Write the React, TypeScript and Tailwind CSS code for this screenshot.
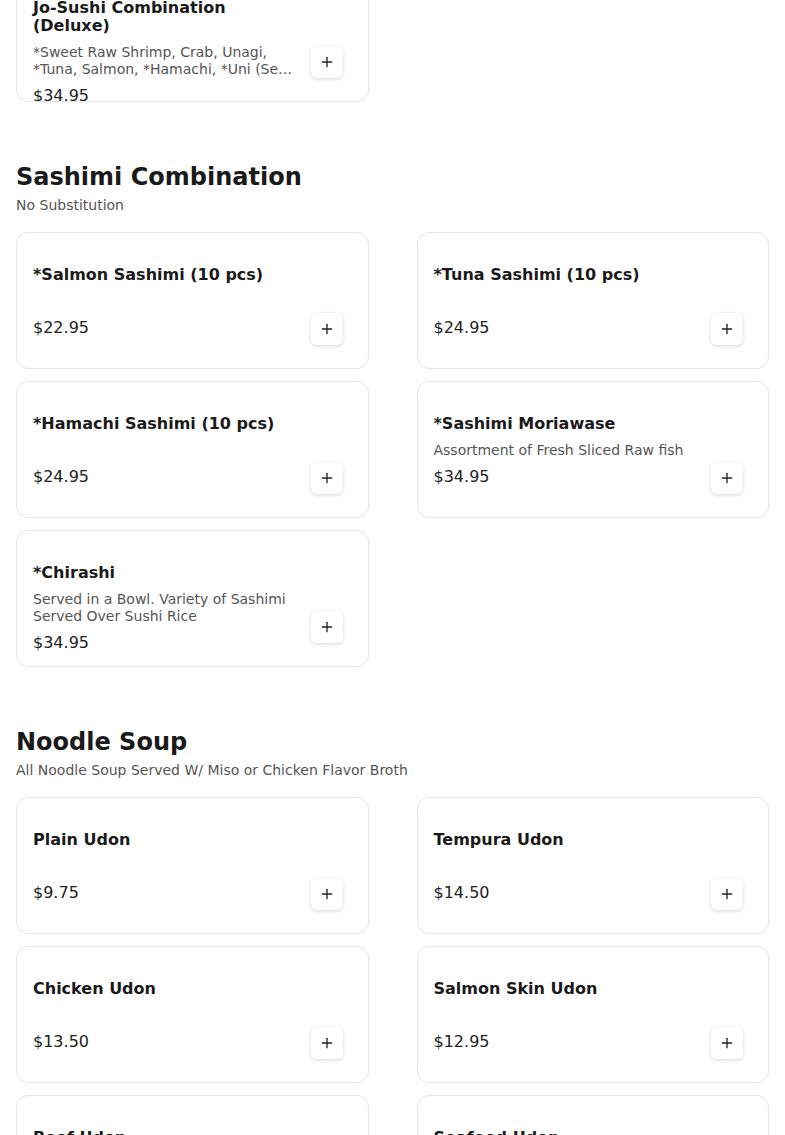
import { Plus } from 'lucide-react';

interface MenuItem {
  name: string;
  description?: string;
  price: string;
}

interface Section {
  title?: string;
  subtitle?: string;
  items: MenuItem[];
}

const sections: Section[] = [
  {
    items: [
      {
        name: 'Jo-Sushi Combination (Deluxe)',
        description:
          '*Sweet Raw Shrimp, Crab, Unagi, *Tuna, Salmon, *Hamachi, *Uni (Sea Urchin), *Ikura, Tamago & Tuna Roll',
        price: '$34.95',
      },
    ],
  },
  {
    title: 'Sashimi Combination',
    subtitle: 'No Substitution',
    items: [
      { name: '*Salmon Sashimi (10 pcs)', price: '$22.95' },
      { name: '*Tuna Sashimi (10 pcs)', price: '$24.95' },
      { name: '*Hamachi Sashimi (10 pcs)', price: '$24.95' },
      {
        name: '*Sashimi Moriawase',
        description: 'Assortment of Fresh Sliced Raw fish',
        price: '$34.95',
      },
      {
        name: '*Chirashi',
        description: 'Served in a Bowl. Variety of Sashimi Served Over Sushi Rice',
        price: '$34.95',
      },
    ],
  },
  {
    title: 'Noodle Soup',
    subtitle: 'All Noodle Soup Served W/ Miso or Chicken Flavor Broth',
    items: [
      { name: 'Plain Udon', price: '$9.75' },
      { name: 'Tempura Udon', price: '$14.50' },
      { name: 'Chicken Udon', price: '$13.50' },
      { name: 'Salmon Skin Udon', price: '$12.95' },
      { name: 'Beef Udon', price: '$14.95' },
      { name: 'Seafood Udon', price: '$16.95' },
    ],
  },
];

export default function App() {
  return (
    <div className="min-h-screen overflow-hidden bg-white font-['DejaVu_Sans',sans-serif] text-[#1a1a1a]">
      {/* page is shown scrolled: the previous section's last card sits partly above the top */}
      <div className="-mt-[35px] flex flex-col gap-[58px] px-4">
        {sections.map((section, i) => (
          <MenuSection key={i} section={section} />
        ))}
      </div>
    </div>
  );
}

function MenuSection({ section }: { section: Section }) {
  return (
    <section>
      {section.title && (
        <div className="mb-[17px]">
          <h2 className="pt-[1px] text-2xl leading-8 font-bold">{section.title}</h2>
          <p className="mt-[2px] text-sm leading-5 text-[#555]">{section.subtitle}</p>
        </div>
      )}
      <div className="grid grid-cols-2 gap-x-12 gap-y-3">
        {section.items.map((item) => (
          <MenuCard key={item.name} item={item} />
        ))}
      </div>
    </section>
  );
}

function MenuCard({ item }: { item: MenuItem }) {
  return (
    <div className="flex h-[137px] overflow-hidden rounded-xl border border-[#e5e5e5] bg-white pr-[25px] pl-4">
      <div className="min-w-0 flex-1 pt-[33px]">
        <h3 className="text-base leading-[18px] font-bold">{item.name}</h3>
        <p className="mt-[9px] line-clamp-2 min-h-[17px] text-sm leading-[17px] text-[#555]">
          {item.description}
        </p>
        <p className="mt-[6px] text-base leading-6 text-[#222]">{item.price}</p>
      </div>
      <button className="mt-[80px] ml-4 flex h-8 w-8 shrink-0 items-center justify-center rounded-md bg-white text-[#222] shadow-[0_1px_4px_rgba(0,0,0,0.16)]">
        <Plus className="h-4 w-4" strokeWidth={2} />
      </button>
    </div>
  );
}
